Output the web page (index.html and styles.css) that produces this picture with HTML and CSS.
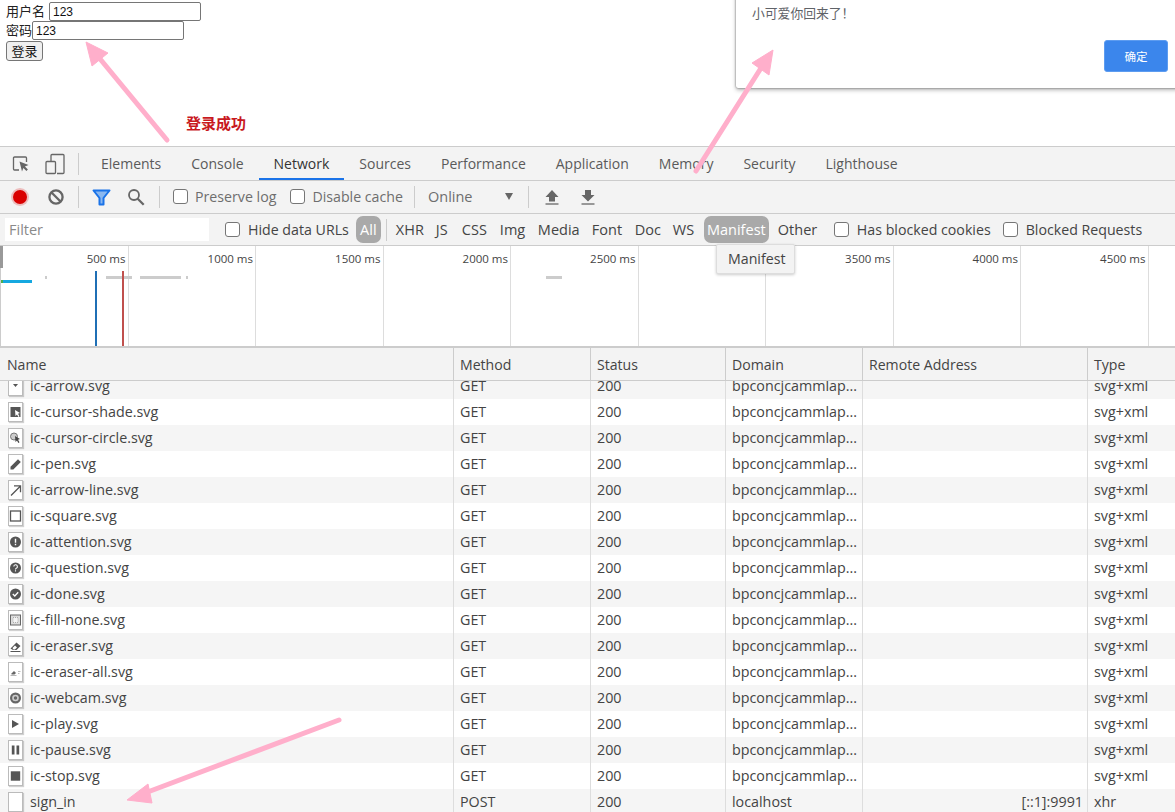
FILE: index.html
```html
<!DOCTYPE html>
<html lang="zh">
<head>
<meta charset="utf-8">
<title>登录</title>
<link rel="stylesheet" href="styles.css">
</head>
<body>
<svg width="0" height="0" class="defs">
  <symbol id="i-arrow" viewBox="1 1 13 18"><path d="M5 8h5l-2.500 3z" fill="#555"/></symbol>
  <symbol id="i-shade" viewBox="1 1 13 18"><rect x="2.500" y="5" width="10" height="10" fill="#555"/><path d="M7 8l5 3-2 .8 1.500 2.500-1.200.7-1.300-2.500-1.500 1.500z" fill="#fff"/></symbol>
  <symbol id="i-circle" viewBox="1 1 13 18"><circle cx="6" cy="8.500" r="3.500" fill="#ccc" stroke="#777"/><path d="M7 8l5 3-2 .8 1.500 2.500-1.200.7-1.300-2.500-1.500 1.500z" fill="#444"/></symbol>
  <symbol id="i-pen" viewBox="1 1 13 18"><path d="M2.500 15.500v-2.800L10 5.200 12.800 8 5.300 15.500z" fill="#555"/></symbol>
  <symbol id="i-line" viewBox="1 1 13 18"><path d="M3 15.500L12 6.500M6 5.800h6.500v6.500" fill="none" stroke="#555" stroke-width="1.300"/></symbol>
  <symbol id="i-square" viewBox="1 1 13 18"><rect x="2.500" y="5" width="10" height="10" fill="none" stroke="#555" stroke-width="1.300"/></symbol>
  <symbol id="i-attention" viewBox="1 1 13 18"><circle cx="7.500" cy="10" r="5.500" fill="#555"/><path d="M6.800 6.800h1.400v4h-1.400zM6.800 11.800h1.400v1.400h-1.400z" fill="#fff"/></symbol>
  <symbol id="i-question" viewBox="1 1 13 18"><circle cx="7.500" cy="10" r="5.500" fill="#555"/><path d="M5.800 8.500a1.800 1.800 0 1 1 2.500 1.700c-.6.300-.8.600-.8 1.200M7.500 12.300v1.200" fill="none" stroke="#fff" stroke-width="1.100"/></symbol>
  <symbol id="i-done" viewBox="1 1 13 18"><circle cx="7.500" cy="10" r="5.500" fill="#555"/><path d="M4.800 10l2 2 3.400-3.800" fill="none" stroke="#fff" stroke-width="1.300"/></symbol>
  <symbol id="i-fill" viewBox="1 1 13 18"><rect x="2.500" y="5" width="10" height="10" fill="#ddd" stroke="#666"/><rect x="5" y="7.500" width="5" height="5" fill="#f4f4f4" stroke="#aaa" stroke-dasharray="1 1"/></symbol>
  <symbol id="i-eraser" viewBox="1 1 13 18"><path d="M2.500 12.500L8.500 6.500l4 3.500-4 4H5z" fill="#555"/><path d="M2.500 15.500h10" stroke="#555"/><path d="M4.500 12l2.500-2.500 2 2L6.800 13.500H5.500z" fill="#fff"/></symbol>
  <symbol id="i-eraser-all" viewBox="1 1 13 18"><path d="M3 12l3-3 2 2-1.500 1.500H4z" fill="#666"/><path d="M2.500 13.500h6" stroke="#999" stroke-width=".7"/><path d="M10 9.500h2.500M10 11.500h1.500" stroke="#aaa" stroke-width=".8"/></symbol>
  <symbol id="i-webcam" viewBox="1 1 13 18"><circle cx="7.500" cy="10" r="5.500" fill="#666"/><circle cx="7.500" cy="10" r="3.300" fill="#ccc"/><circle cx="7.500" cy="10" r="1.700" fill="#666"/></symbol>
  <symbol id="i-play" viewBox="1 1 13 18"><path d="M4 6l7 4-7 4z" fill="#555"/></symbol>
  <symbol id="i-pause" viewBox="1 1 13 18"><path d="M3.800 5.500h2.700v9H3.800zM8.500 5.500h2.700v9H8.500z" fill="#555"/></symbol>
  <symbol id="i-stop" viewBox="1 1 13 18"><rect x="2.800" y="5.300" width="9.400" height="9.400" fill="#555"/></symbol>
</svg>

<main class="page">
  <form class="login">
    <div class="field field-user"><label class="lbl">用户名</label><input class="inp" value="123"></div>
    <div class="field"><label class="lbl">密码</label><input class="inp" value="123"></div>
    <button type="button" class="submit">登录</button>
  </form>
</main>

<section class="dialog">
  <p class="dialog-text">小可爱你回来了！</p>
  <button type="button" class="dialog-ok">确定</button>
</section>

<section class="devtools">
  <nav class="tabbar">
    <span class="tool-ic first">
      <svg width="18" height="18" viewBox="0 0 18 18"><path d="M7 15H2.500a1 1 0 0 1-1-1V3a1 1 0 0 1 1-1h11a1 1 0 0 1 1 1v4" fill="none" stroke="#666" stroke-width="1.300"/><path d="M7.500 6.500l9 3.600-3.600 1.400 3 3-1.500 1.500-3-3-1.400 3.600z" fill="#666"/></svg>
    </span>
    <span class="tool-ic second">
      <svg width="20" height="22" viewBox="0 0 20 22"><path d="M6 8V2.500a1 1 0 0 1 1-1h11a1 1 0 0 1 1 1v17a1 1 0 0 1-1 1h-6" fill="none" stroke="#666" stroke-width="1.300"/><rect x="1" y="8.500" width="9.500" height="12" rx="1" fill="none" stroke="#666" stroke-width="1.300"/></svg>
    </span>
    <span class="sep"></span>
    <a class="tab">Elements</a>
    <a class="tab">Console</a>
    <a class="tab active">Network</a>
    <a class="tab">Sources</a>
    <a class="tab">Performance</a>
    <a class="tab">Application</a>
    <a class="tab">Memory</a>
    <a class="tab">Security</a>
    <a class="tab">Lighthouse</a>
  </nav>

  <div class="toolbar">
    <span class="record"></span>
    <svg class="t-clear" width="18" height="18" viewBox="0 0 18 18"><circle cx="9" cy="9" r="6.600" fill="none" stroke="#666" stroke-width="2.300"/><path d="M4.500 4.500l9 9" stroke="#666" stroke-width="2.300"/></svg>
    <span class="sep sep-a"></span>
    <svg class="t-filter" width="19" height="17" viewBox="0 0 19 17"><path d="M1.500 1.500h16L11.500 9v6.500h-4V9z" fill="#8ab8f0" stroke="#1a73e8" stroke-width="2" stroke-linejoin="round"/></svg>
    <svg class="t-search" width="18" height="18" viewBox="0 0 18 18"><circle cx="7" cy="7" r="5" fill="none" stroke="#666" stroke-width="1.800"/><path d="M10.700 10.700l6 6" stroke="#666" stroke-width="2.300"/></svg>
    <span class="sep sep-b"></span>
    <label class="check c-preserve"><span class="box"></span>Preserve log</label>
    <label class="check c-cache"><span class="box"></span>Disable cache</label>
    <span class="sep sep-c"></span>
    <span class="throttle">Online</span>
    <span class="caret"></span>
    <span class="sep sep-d"></span>
    <svg class="t-up" width="14" height="16" viewBox="0 0 14 16"><path d="M7 1l6.500 7H10v4.500H4V8H.5z" fill="#666"/><path d="M.5 15h13" stroke="#666" stroke-width="1.300"/></svg>
    <svg class="t-down" width="14" height="16" viewBox="0 0 14 16"><path d="M4 1h6v5h3.500L7 12.500.5 6H4z" fill="#666"/><path d="M.5 15h13" stroke="#666" stroke-width="1.300"/></svg>
  </div>

  <div class="filterbar">
    <span class="filter-input">Filter</span>
    <label class="check c-hide"><span class="box"></span>Hide data URLs</label>
    <span class="pill pill-all">All</span>
    <span class="sep sep-e"></span>
    <span class="ft ft-xhr">XHR</span>
    <span class="ft ft-js">JS</span>
    <span class="ft ft-css">CSS</span>
    <span class="ft ft-img">Img</span>
    <span class="ft ft-media">Media</span>
    <span class="ft ft-font">Font</span>
    <span class="ft ft-doc">Doc</span>
    <span class="ft ft-ws">WS</span>
    <span class="pill pill-man">Manifest</span>
    <span class="ft ft-other">Other</span>
    <label class="check c-cookies"><span class="box"></span>Has blocked cookies</label>
    <label class="check c-blocked"><span class="box"></span>Blocked Requests</label>
  </div>

  <div class="overview">
    <div class="tick">500 ms</div>
    <div class="tick">1000 ms</div>
    <div class="tick">1500 ms</div>
    <div class="tick">2000 ms</div>
    <div class="tick">2500 ms</div>
    <div class="tick">3000 ms</div>
    <div class="tick">3500 ms</div>
    <div class="tick">4000 ms</div>
    <div class="tick">4500 ms</div>
    <span class="handle"></span>
    <span class="bar b-blue"></span>
    <span class="bar b-green"></span>
    <span class="bar b-g1"></span>
    <span class="bar b-g2"></span>
    <span class="bar b-g3"></span>
    <span class="bar b-g4"></span>
    <span class="bar b-g5"></span>
    <span class="vline v-blue"></span>
    <span class="vline v-red"></span>
  </div>

  <div class="thead">
    <div>Name</div><div>Method</div><div>Status</div><div>Domain</div><div>Remote Address</div><div>Type</div>
  </div>

  <div class="tbody">
    <div class="rows">
      <div class="row"><div class="name"><span class="fi"><svg><use href="#i-arrow"/></svg></span>ic-arrow.svg</div><div>GET</div><div>200</div><div>bpconcjcammlap...</div><div></div><div>svg+xml</div></div>
      <div class="row"><div class="name"><span class="fi"><svg><use href="#i-shade"/></svg></span>ic-cursor-shade.svg</div><div>GET</div><div>200</div><div>bpconcjcammlap...</div><div></div><div>svg+xml</div></div>
      <div class="row"><div class="name"><span class="fi"><svg><use href="#i-circle"/></svg></span>ic-cursor-circle.svg</div><div>GET</div><div>200</div><div>bpconcjcammlap...</div><div></div><div>svg+xml</div></div>
      <div class="row"><div class="name"><span class="fi"><svg><use href="#i-pen"/></svg></span>ic-pen.svg</div><div>GET</div><div>200</div><div>bpconcjcammlap...</div><div></div><div>svg+xml</div></div>
      <div class="row"><div class="name"><span class="fi"><svg><use href="#i-line"/></svg></span>ic-arrow-line.svg</div><div>GET</div><div>200</div><div>bpconcjcammlap...</div><div></div><div>svg+xml</div></div>
      <div class="row"><div class="name"><span class="fi"><svg><use href="#i-square"/></svg></span>ic-square.svg</div><div>GET</div><div>200</div><div>bpconcjcammlap...</div><div></div><div>svg+xml</div></div>
      <div class="row"><div class="name"><span class="fi"><svg><use href="#i-attention"/></svg></span>ic-attention.svg</div><div>GET</div><div>200</div><div>bpconcjcammlap...</div><div></div><div>svg+xml</div></div>
      <div class="row"><div class="name"><span class="fi"><svg><use href="#i-question"/></svg></span>ic-question.svg</div><div>GET</div><div>200</div><div>bpconcjcammlap...</div><div></div><div>svg+xml</div></div>
      <div class="row"><div class="name"><span class="fi"><svg><use href="#i-done"/></svg></span>ic-done.svg</div><div>GET</div><div>200</div><div>bpconcjcammlap...</div><div></div><div>svg+xml</div></div>
      <div class="row"><div class="name"><span class="fi"><svg><use href="#i-fill"/></svg></span>ic-fill-none.svg</div><div>GET</div><div>200</div><div>bpconcjcammlap...</div><div></div><div>svg+xml</div></div>
      <div class="row"><div class="name"><span class="fi"><svg><use href="#i-eraser"/></svg></span>ic-eraser.svg</div><div>GET</div><div>200</div><div>bpconcjcammlap...</div><div></div><div>svg+xml</div></div>
      <div class="row"><div class="name"><span class="fi"><svg><use href="#i-eraser-all"/></svg></span>ic-eraser-all.svg</div><div>GET</div><div>200</div><div>bpconcjcammlap...</div><div></div><div>svg+xml</div></div>
      <div class="row"><div class="name"><span class="fi"><svg><use href="#i-webcam"/></svg></span>ic-webcam.svg</div><div>GET</div><div>200</div><div>bpconcjcammlap...</div><div></div><div>svg+xml</div></div>
      <div class="row"><div class="name"><span class="fi"><svg><use href="#i-play"/></svg></span>ic-play.svg</div><div>GET</div><div>200</div><div>bpconcjcammlap...</div><div></div><div>svg+xml</div></div>
      <div class="row"><div class="name"><span class="fi"><svg><use href="#i-pause"/></svg></span>ic-pause.svg</div><div>GET</div><div>200</div><div>bpconcjcammlap...</div><div></div><div>svg+xml</div></div>
      <div class="row"><div class="name"><span class="fi"><svg><use href="#i-stop"/></svg></span>ic-stop.svg</div><div>GET</div><div>200</div><div>bpconcjcammlap...</div><div></div><div>svg+xml</div></div>
      <div class="row"><div class="name"><span class="fi"></span>sign_in</div><div>POST</div><div>200</div><div>localhost</div><div class="remote">[::1]:9991</div><div>xhr</div></div>
    </div>
  </div>
</section>

<div class="tooltip">Manifest</div>

<p class="note">登录成功</p>

<svg class="arrows" width="1175" height="812" viewBox="0 0 1175 812">
  <g fill="#ffafcb" stroke="#ffafcb">
    <path d="M167 140L96 54" fill="none" stroke-width="5" stroke-linecap="round"/>
    <path d="M86 42L108 53L92 66z" stroke-width="1"/>
    <path d="M696 171L761 68" fill="none" stroke-width="5" stroke-linecap="round"/>
    <path d="M773 50L752 63L769 75z" stroke-width="1"/>
    <path d="M339 720L145 793" fill="none" stroke-width="5" stroke-linecap="round"/>
    <path d="M127 800L148 784L152 803z" stroke-width="1"/>
  </g>
</svg>
</body>
</html>
```

FILE: styles.css
```css
* { box-sizing: border-box; }
html, body { margin: 0; padding: 0; }
body {
  position: relative;
  width: 1175px;
  height: 812px;
  overflow: hidden;
  background: #fff;
  font-family: "Open Sans", "Noto Sans CJK SC", sans-serif;
  font-size: 14.5px;
  color: #333;
}
.defs { position: absolute; }

/* page */
.page { height: 146px; padding: 2px 0 0 6px; }
.login { display: flex; flex-direction: column; align-items: flex-start; }
.field { display: flex; align-items: center; height: 19px; }
.lbl { font-family: "Noto Sans CJK SC", sans-serif; font-size: 13px; line-height: 17px; margin-bottom: 2px; color: #222; }
.field-user .lbl { margin-right: 4px; }
.inp {
  width: 152px; height: 19px; padding: 0 3px;
  border: 1px solid #767676; border-radius: 2px;
  font-family: "Liberation Sans", sans-serif; font-size: 12px; color: #111;
  background: #fff; outline: none;
}
.submit {
  width: 37px; height: 20px; margin-top: 1px; padding: 0 0 2px;
  border: 1px solid #767676; border-radius: 3px; background: #efefef;
  font-family: "Noto Sans CJK SC", sans-serif; font-size: 13px; line-height: 1; color: #111;
}

/* dialog */
.dialog {
  position: absolute; top: -10px; left: 736px; width: 450px; height: 98px;
  background: #fff; border-radius: 2px;
  box-shadow: 0 0 2px rgba(0,0,0,.55), 0 2px 4px rgba(0,0,0,.3);
}
.dialog-text {
  margin: 0; position: absolute; left: 16px; top: 14px;
  font-family: "Noto Sans CJK SC", sans-serif; font-size: 12.800px; line-height: 18px; color: #5f6368;
}
.dialog-ok {
  position: absolute; left: 368px; top: 50px; width: 64px; height: 32px; padding: 0;
  border: 1px solid #5d9cf0; border-radius: 3px; background: #3b86ec; color: #fff;
  font-family: "Noto Sans CJK SC", sans-serif; font-size: 11.500px;
}

/* devtools */
.devtools { border-top: 1px solid #ccc; background: #f3f3f3; height: 666px; display: flex; flex-direction: column; }
.sep { width: 1px; height: 22px; background: #ccc; flex: none; }

.tabbar {
  display: flex; align-items: center; height: 34px; flex: none;
  border-bottom: 1px solid #ccc; color: #5a5a5a; font-size: 14px;
}
.tool-ic { display: flex; flex: none; }
.tool-ic.first { margin-left: 12px; }
.tool-ic.second { margin-left: 15px; }
.tabbar .sep { margin-left: 13px; margin-right: 7px; }
.tab { position: relative; height: 33px; line-height: 34px; padding: 0 15px; flex: none; }
.tab.active { color: #333; }
.tab.active::after { content: ""; position: absolute; left: 0; right: 0; bottom: 0; height: 2px; background: #1a73e8; }

.toolbar {
  display: flex; align-items: center; height: 33px; flex: none;
  border-bottom: 1px solid #ccc; color: #6e6e6e;
}
.record {
  width: 14px; height: 14px; margin-left: 13px; border-radius: 50%; background: #d90000;
  box-shadow: 0 0 0 2px rgba(217,0,0,.22); flex: none;
}
.t-clear { margin-left: 20px; flex: none; }
.sep-a { margin-left: 13px; }
.t-filter { margin-left: 13px; flex: none; }
.t-search { margin-left: 16px; flex: none; }
.sep-b { margin-left: 14px; }
.check { display: flex; align-items: center; flex: none; white-space: nowrap; font-size: 14.200px; }
.toolbar .check, .throttle, .caret { margin-bottom: 2px; }
.box {
  width: 15px; height: 15px; margin-right: 7px; flex: none;
  border: 1px solid #767676; border-radius: 3px; background: #fff;
}
.filterbar .box { margin-right: 8px; }
.c-preserve { margin-left: 13px; }
.c-cache { margin-left: 14px; }
.sep-c { margin-left: 11px; }
.throttle { margin-left: 13px; width: 77px; flex: none; }
.caret { width: 0; height: 0; border: solid transparent; border-width: 7px 4.500px 0; border-top-color: #666; flex: none; }
.sep-d { margin-left: 15px; }
.t-up { margin-left: 16px; flex: none; }
.t-down { margin-left: 22px; flex: none; }

.filterbar {
  display: flex; align-items: center; height: 32px; flex: none;
  border-bottom: 1px solid #ccc; color: #444;
}
.filter-input {
  width: 204px; height: 23px; margin-left: 5px; padding-left: 4px; line-height: 24px;
  background: #fff; color: #8a8a8a; flex: none;
}
.c-hide { margin-left: 16px; }
.pill { height: 27px; line-height: 27px; border-radius: 7px; background: #a9a9a9; color: #fff; text-align: center; flex: none; }
.pill-all { width: 25px; margin-left: 7px; }
.sep-e { margin-left: 5px; }
.ft { flex: none; }
.ft-xhr { margin-left: 9px; width: 40px; }
.ft-js { width: 26px; }
.ft-css { width: 38px; }
.ft-img { width: 38px; }
.ft-media { width: 54px; }
.ft-font { width: 43px; }
.ft-doc { width: 38px; }
.ft-ws { width: 31px; }
.pill-man { width: 65px; }
.ft-other { margin-left: 9px; width: 56px; }
.c-blocked { margin-left: 12px; }

.overview {
  position: relative; display: flex; height: 100px; flex: none;
  background: #fff; border-left: 1px solid #ccc;
}
.tick {
  width: 127.500px; height: 100%; flex: none; padding: 5px 2px 0 0;
  border-right: 1px solid #ddd; text-align: right;
  font-size: 11.500px; line-height: 16px; color: #444;
}
.handle { position: absolute; left: -1px; top: 0; width: 3px; height: 22px; background: #999; }
.bar { position: absolute; height: 3px; background: #ccc; }
.b-blue { left: 0; top: 34px; width: 31px; background: #16a8e0; }
.b-green { left: 0; top: 34px; width: 2px; background: #4caf50; }
.b-g1 { left: 44px; top: 30px; width: 2px; }
.b-g2 { left: 105px; top: 30px; width: 26px; }
.b-g3 { left: 139px; top: 30px; width: 41px; }
.b-g4 { left: 185px; top: 30px; width: 2px; }
.b-g5 { left: 545px; top: 30px; width: 16px; }
.vline { position: absolute; top: 25px; bottom: 0; width: 1.500px; }
.v-blue { left: 94px; background: #1f6fb5; }
.v-red { left: 121px; background: #c0504d; }

.thead, .row {
  display: grid;
  grid-template-columns: 454px 137px 135px 137px 225px 1fr;
}
.thead {
  height: 35px; flex: none; align-items: stretch;
  border-top: 2px solid #ccc; border-bottom: 1px solid #ccc;
  color: #444; font-size: 14.100px;
}
.thead > div { padding: 0 0 0 6px; line-height: 33px; border-right: 1px solid #ccc; }
.thead > div:first-child { padding-left: 7px; }
.thead > div:last-child { border-right: 0; }

.tbody { flex: 1; min-height: 0; overflow: hidden; background: #fff; }
.rows { margin-top: -8px; }
.row { height: 26px; line-height: 26px; color: #444; font-size: 14.300px; white-space: nowrap; }
.row:nth-child(odd) { background: #f5f5f5; }
.row > div { padding-left: 6px; border-right: 1px solid #ddd; overflow: hidden; }
.row > div:last-child { border-right: 0; }
.row > .name { display: flex; align-items: center; padding-left: 8px; }
.row > .remote { text-align: right; padding: 0 4px 0 0; }
.fi {
  display: block; width: 15px; height: 20px; margin-right: 7px; flex: none;
  background: #fff; border: 1px solid #bbb; box-shadow: 1px 1px 1px rgba(0,0,0,.18);
}
.fi svg { display: block; width: 13px; height: 18px; overflow: visible; }

/* overlays */
.tooltip {
  position: absolute; left: 716px; top: 244px; width: 79px; height: 30px; padding-left: 11px;
  line-height: 28px; background: #f3f3f3; border: 1px solid #ddd; border-radius: 2px;
  box-shadow: 0 1px 3px rgba(0,0,0,.2); color: #444; font-size: 14.200px;
}
.note {
  position: absolute; left: 186px; top: 113px; margin: 0;
  font-family: "Noto Sans CJK SC", sans-serif; font-size: 15px; font-weight: 700; line-height: 20px; color: #c8191e;
}
.arrows { position: absolute; left: 0; top: 0; pointer-events: none; }
```
